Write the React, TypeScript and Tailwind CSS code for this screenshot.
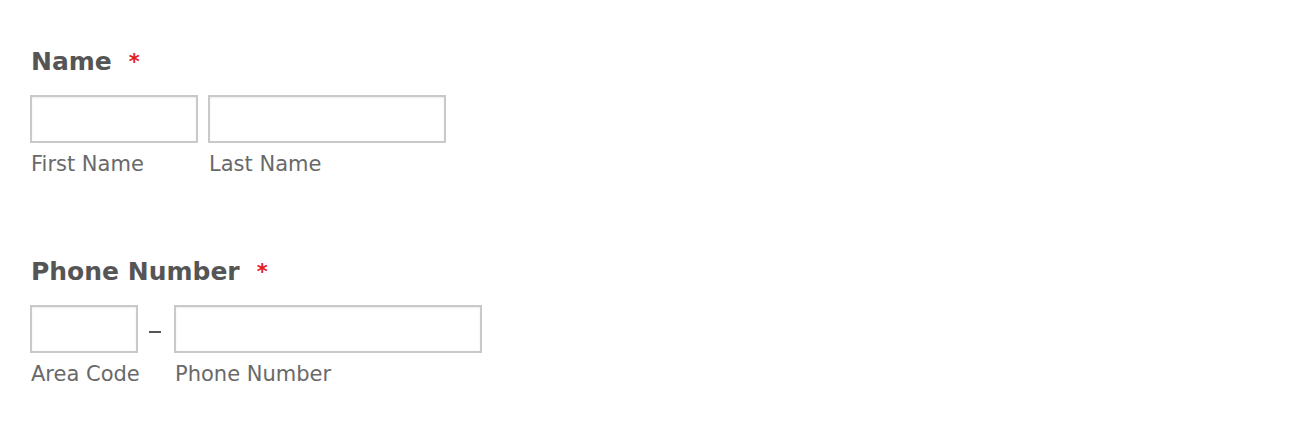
import React from "react";

const font = { fontFamily: '"DejaVu Sans", "Liberation Sans", sans-serif' };

function Field({ width, label }: { width: string; label: string }) {
  return (
    <div className={`${width} flex flex-col shrink-0`}>
      <input
        type="text"
        className="w-full h-[48px] border-2 border-[#c9c9c9] bg-white shadow-[inset_0_1px_2px_rgba(0,0,0,0.08)] outline-none"
      />
      <span className="mt-[9px] pl-px whitespace-nowrap text-[21px] leading-[24px] text-[#696969]">{label}</span>
    </div>
  );
}

function Heading({ text }: { text: string }) {
  return (
    <div className="flex items-start h-[30px] pl-px">
      <span className="text-[25px] leading-[30px] font-bold text-[#555555]">{text}</span>
      <span className="ml-[17px] text-[21px] leading-[30px] font-bold text-[#e3211b]">*</span>
    </div>
  );
}

export default function App() {
  return (
    <div className="min-h-[447px] w-[1300px] bg-white pl-[30px] pt-[47px]" style={font}>
      <Heading text="Name" />
      <div className="mt-[18px] flex gap-[10px]">
        <Field width="w-[168px]" label="First Name" />
        <Field width="w-[238px]" label="Last Name" />
      </div>

      <div className="mt-[81px]">
        <Heading text="Phone Number" />
        <div className="mt-[18px] flex">
          <Field width="w-[108px]" label="Area Code" />
          <div className="w-[36px] h-[48px] flex items-center justify-center shrink-0">
            <div className="mt-[6px] -ml-[2px] w-[12px] h-[2px] bg-[#555555]" />
          </div>
          <Field width="w-[308px]" label="Phone Number" />
        </div>
      </div>
    </div>
  );
}
